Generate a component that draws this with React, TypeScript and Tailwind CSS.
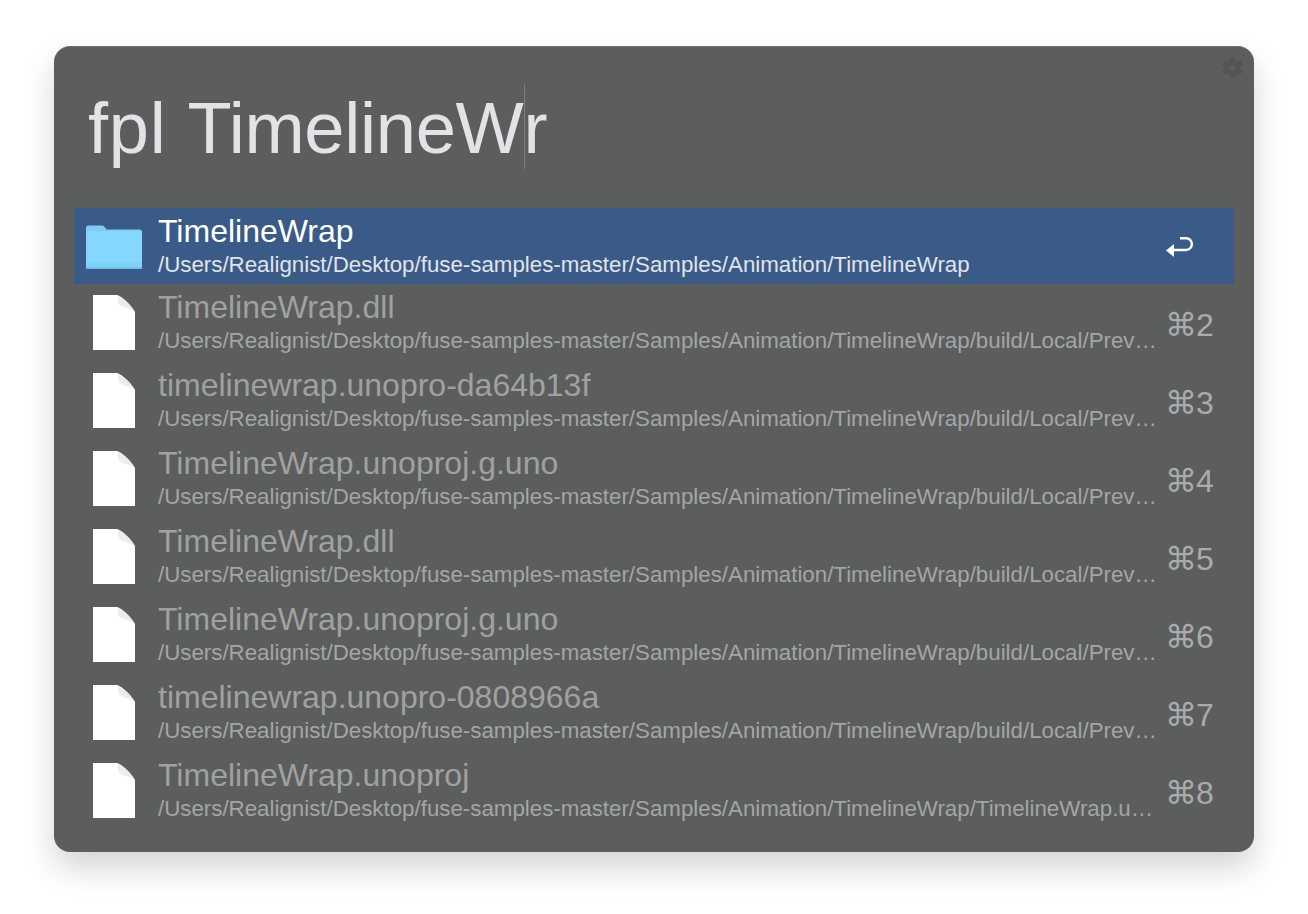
import React from "react";
import { FaGear } from "react-icons/fa6";

const P = "/Users/Realignist/Desktop/fuse-samples-master/Samples/Animation/TimelineWrap";
const LONG = P + "/build/Local/Prev…";

const rows = [
  { t: "TimelineWrap.dll", p: LONG, k: "2" },
  { t: "timelinewrap.unopro-da64b13f", p: LONG, k: "3" },
  { t: "TimelineWrap.unoproj.g.uno", p: LONG, k: "4" },
  { t: "TimelineWrap.dll", p: LONG, k: "5" },
  { t: "TimelineWrap.unoproj.g.uno", p: LONG, k: "6" },
  { t: "timelinewrap.unopro-0808966a", p: LONG, k: "7" },
  { t: "TimelineWrap.unoproj", p: P + "/TimelineWrap.u…", k: "8" },
];

function Folder() {
  return (
    <svg width="58" height="46" viewBox="0 0 58 46" className="block">
      <path d="M1 4a2.500 2.500 0 0 1 2.500-2.500h13c2 0 2.600.7 3.600 2l1.400 2h33A2.500 2.500 0 0 1 57 8v4H1z" fill="#7cccf3" />
      <path d="M1 9a2 2 0 0 1 2-2h52a2 2 0 0 1 2 2v34a2 2 0 0 1-2 2H3a2 2 0 0 1-2-2z" fill="#85d7fd" />
      <path d="M1 38h56v5a2 2 0 0 1-2 2H3a2 2 0 0 1-2-2z" fill="#7fd1f7" />
      <path d="M1 43.500h56v.5a2 2 0 0 1-2 1H3a2 2 0 0 1-2-1z" fill="#6cbde6" />
    </svg>
  );
}

function Doc() {
  return (
    <svg width="42" height="56" viewBox="0 0 42 56" className="block">
      <path d="M0 0H24C30 2 38 10 42 17V55H0z" fill="#ffffff" />
      <path d="M25 .5C25 7 25.500 10 28 11L41.500 16.500C37 10 31 3 25 .5z" fill="#ececec" />
    </svg>
  );
}

function ReturnIcon() {
  return (
    <svg width="28" height="22" viewBox="0 0 28 22" className="block">
      <path d="M14 2.200h6a5.800 5.800 0 0 1 0 11.800H6" fill="none" stroke="#ffffff" strokeWidth="2.400" />
      <path d="M0 14.500L8 8v13z" fill="#ffffff" />
    </svg>
  );
}

export default function App() {
  return (
    <div className="w-[1308px] h-[914px] bg-white pt-[46px] pl-[54px] overflow-hidden font-['Liberation_Sans','DejaVu_Sans',sans-serif]">
      <div className="relative w-[1200px] h-[806px] rounded-[16px] bg-[#5b5e5d] px-5 shadow-[0_16px_32px_rgba(0,0,0,0.17)] border-t border-[#6e706f]">
        <FaGear className="absolute right-[11px] top-[10px] text-[#525554] text-[21px]" />
        <div className="h-[161px] pl-[14px] pt-[37px]">
          <div className="relative w-fit text-[72.300px] leading-[88px] text-[#e4e2e7] whitespace-pre">
            <span className="tracking-[0.750px]">fpl </span>
            <span className="tracking-[-0.300px]">TimelineW</span>
            <span className="absolute top-0 inline-block w-px h-[85px] bg-[#7d8080]" />
            <span>r</span>
          </div>
        </div>
        <div className="h-[76px] bg-[#3a5b87] flex items-center">
          <div className="w-[84px] pl-[11px] pt-[2px] shrink-0"><Folder /></div>
          <div className="flex-1 min-w-0 pt-[3px]">
            <div className="text-[32px] leading-[33px] text-white whitespace-nowrap">TimelineWrap</div>
            <div className="text-[22.300px] leading-[33px] text-[#e0e4ea] whitespace-nowrap">{P}</div>
          </div>
          <div className="w-[70px] pl-[2px] pt-[2px] shrink-0"><ReturnIcon /></div>
        </div>
        <div>
          {rows.map((r) => (
            <div key={r.k} className="h-[78px] flex items-center border-b border-[#585b5a]">
              <div className="w-[84px] pl-[19px] shrink-0"><Doc /></div>
              <div className="flex-1 min-w-0 pt-[3px]">
                <div className="text-[32px] leading-[33px] text-[#a0a1a1] whitespace-nowrap">{r.t}</div>
                <div className="text-[22.300px] leading-[33px] text-[#a4a5a5] whitespace-nowrap">{r.p}</div>
              </div>
              <div className="w-[72px] pl-[3px] pt-[5px] shrink-0 text-[32px] leading-[36px] tracking-[-1px] text-[#aaabab] whitespace-nowrap">⌘{r.k}</div>
            </div>
          ))}
        </div>
      </div>
    </div>
  );
}
